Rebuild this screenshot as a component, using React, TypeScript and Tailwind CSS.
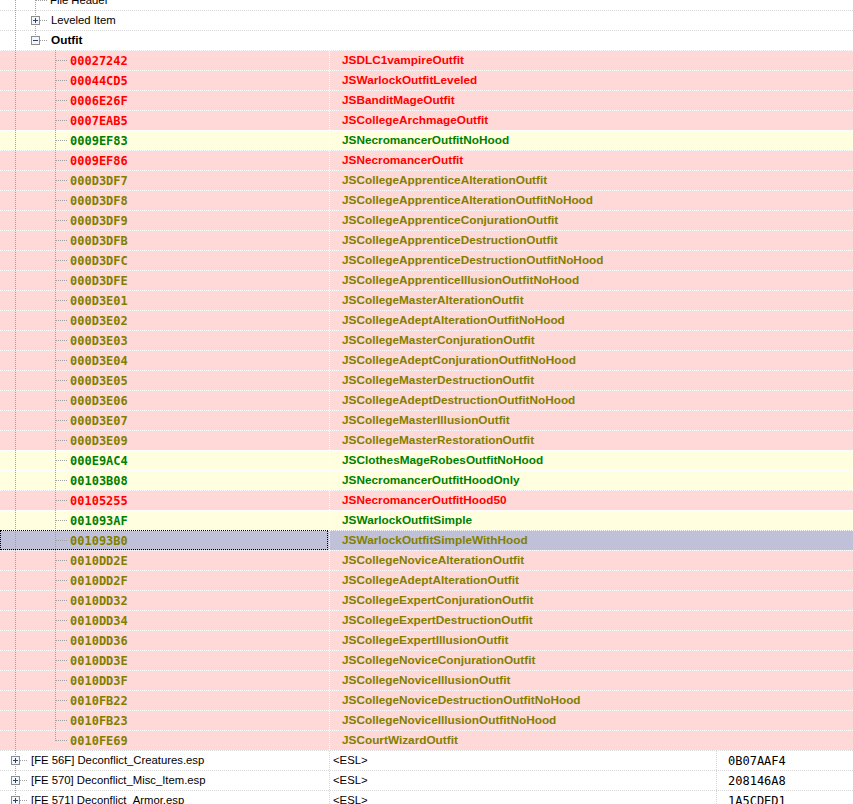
type Kind = "r" | "g" | "o";

const outfits: [string, string, Kind][] = [
  ["00027242", "JSDLC1vampireOutfit", "r"],
  ["00044CD5", "JSWarlockOutfitLeveled", "r"],
  ["0006E26F", "JSBanditMageOutfit", "r"],
  ["0007EAB5", "JSCollegeArchmageOutfit", "r"],
  ["0009EF83", "JSNecromancerOutfitNoHood", "g"],
  ["0009EF86", "JSNecromancerOutfit", "r"],
  ["000D3DF7", "JSCollegeApprenticeAlterationOutfit", "o"],
  ["000D3DF8", "JSCollegeApprenticeAlterationOutfitNoHood", "o"],
  ["000D3DF9", "JSCollegeApprenticeConjurationOutfit", "o"],
  ["000D3DFB", "JSCollegeApprenticeDestructionOutfit", "o"],
  ["000D3DFC", "JSCollegeApprenticeDestructionOutfitNoHood", "o"],
  ["000D3DFE", "JSCollegeApprenticeIllusionOutfitNoHood", "o"],
  ["000D3E01", "JSCollegeMasterAlterationOutfit", "o"],
  ["000D3E02", "JSCollegeAdeptAlterationOutfitNoHood", "o"],
  ["000D3E03", "JSCollegeMasterConjurationOutfit", "o"],
  ["000D3E04", "JSCollegeAdeptConjurationOutfitNoHood", "o"],
  ["000D3E05", "JSCollegeMasterDestructionOutfit", "o"],
  ["000D3E06", "JSCollegeAdeptDestructionOutfitNoHood", "o"],
  ["000D3E07", "JSCollegeMasterIllusionOutfit", "o"],
  ["000D3E09", "JSCollegeMasterRestorationOutfit", "o"],
  ["000E9AC4", "JSClothesMageRobesOutfitNoHood", "g"],
  ["00103B08", "JSNecromancerOutfitHoodOnly", "g"],
  ["00105255", "JSNecromancerOutfitHood50", "r"],
  ["001093AF", "JSWarlockOutfitSimple", "g"],
  ["001093B0", "JSWarlockOutfitSimpleWithHood", "o"],
  ["0010DD2E", "JSCollegeNoviceAlterationOutfit", "o"],
  ["0010DD2F", "JSCollegeAdeptAlterationOutfit", "o"],
  ["0010DD32", "JSCollegeExpertConjurationOutfit", "o"],
  ["0010DD34", "JSCollegeExpertDestructionOutfit", "o"],
  ["0010DD36", "JSCollegeExpertIllusionOutfit", "o"],
  ["0010DD3E", "JSCollegeNoviceConjurationOutfit", "o"],
  ["0010DD3F", "JSCollegeNoviceIllusionOutfit", "o"],
  ["0010FB22", "JSCollegeNoviceDestructionOutfitNoHood", "o"],
  ["0010FB23", "JSCollegeNoviceIllusionOutfitNoHood", "o"],
  ["0010FE69", "JSCourtWizardOutfit", "o"],
];

const plugins: [string, string][] = [
  ["[FE 56F] Deconflict_Creatures.esp", "0B07AAF4"],
  ["[FE 570] Deconflict_Misc_Item.esp", "208146A8"],
  ["[FE 571] Deconflict_Armor.esp", "1A5CDED1"],
];

const SELECTED = "001093B0";
const LINE = "#a0a0a0";

const textColor: Record<Kind, string> = {
  r: "text-[#ff0000]",
  g: "text-[#008000]",
  o: "text-[#808000]",
};

const rowBg: Record<Kind, string> = {
  r: "bg-[#ffd8d8]",
  g: "bg-[#ffffe0]",
  o: "bg-[#ffd8d8]",
};

const VLine = ({ x, y1 = 0, y2 = 20 }: { x: number; y1?: number; y2?: number }) => (
  <line x1={x + 0.5} y1={y1} x2={x + 0.5} y2={y2} stroke={LINE} strokeDasharray="1 1" />
);

const HLine = ({ x1, x2, y = 10 }: { x1: number; x2: number; y?: number }) => (
  <line x1={x1} y1={y + 0.5} x2={x2} y2={y + 0.5} stroke={LINE} strokeDasharray="1 1" />
);

const Box = ({ cx, open }: { cx: number; open: boolean }) => (
  <g>
    <rect x={cx - 3.5} y={6.5} width={8} height={8} fill="#f6f6f6" stroke="#8d8d8d" />
    <line x1={cx - 2} y1={10.5} x2={cx + 3} y2={10.5} stroke="#24447f" />
    {!open && <line x1={cx + 0.5} y1={8} x2={cx + 0.5} y2={13} stroke="#24447f" />}
  </g>
);

const Gutter = ({ width, children }: { width: number; children: React.ReactNode }) => (
  <svg width={width} height={20} className="shrink-0 self-start -mt-px">
    {children}
  </svg>
);

export default function App() {
  return (
    <div className="h-[804px] w-[853px] overflow-hidden bg-white font-['Liberation_Sans',Arial,sans-serif] text-[11.3px] text-black">
      <div className="-mt-[10px]">
        {/* group header rows */}
        <div className="flex h-[20px] items-center border-t border-dotted border-[#d8d8d8]">
          <Gutter width={50}>
            <VLine x={15} />
            <VLine x={35} />
            <HLine x1={36} x2={48} />
          </Gutter>
          <span>File Header</span>
        </div>
        <div className="flex h-[20px] items-center border-t border-dotted border-[#d8d8d8]">
          <Gutter width={51}>
            <VLine x={15} />
            <VLine x={35} />
            <HLine x1={40} x2={48} />
            <Box cx={35} open={false} />
          </Gutter>
          <span>Leveled Item</span>
        </div>
        <div className="flex h-[20px] items-center border-t border-dotted border-[#d8d8d8]">
          <Gutter width={51}>
            <VLine x={15} />
            <VLine x={35} y1={0} y2={6} />
            <HLine x1={40} x2={48} />
            <Box cx={35} open />
          </Gutter>
          <span className="font-bold text-[11.8px]">Outfit</span>
        </div>

        {/* outfit records */}
        {outfits.map(([id, name, kind], i) => {
          const selected = id === SELECTED;
          const last = i === outfits.length - 1;
          return (
            <div
              key={id}
              className={`flex h-[20px] items-stretch border-t border-dotted border-white font-bold text-[11.8px] ${
                selected ? "bg-[#c0c0d8]" : rowBg[kind]
              } ${textColor[kind]}`}
            >
              <div className="relative flex w-[330px] shrink-0 items-center border-r border-dotted border-white">
                <Gutter width={70}>
                  <VLine x={15} />
                  <VLine x={55} y1={0} y2={last ? 11 : 20} />
                  <HLine x1={56} x2={67} />
                </Gutter>
                <span className="font-['DejaVu_Sans_Mono',monospace] text-[12px] font-semibold">{id}</span>
                {selected && (
                  <div className="absolute -top-px bottom-0 left-0 right-px border border-dotted border-black" />
                )}
              </div>
              <div className="flex flex-1 items-center pl-[12px]">{name}</div>
            </div>
          );
        })}

        {/* other plugins */}
        {plugins.map(([file, crc]) => (
          <div
            key={file}
            className="flex h-[20px] items-stretch border-t border-dotted border-[#d8d8d8]"
          >
            <div className="flex w-[330px] shrink-0 items-center border-r border-dotted border-[#d8d8d8]">
              <Gutter width={31}>
                <VLine x={15} />
                <HLine x1={20} x2={28} />
                <Box cx={15} open={false} />
              </Gutter>
              <span>{file}</span>
            </div>
            <div className="flex w-[387px] shrink-0 items-center border-r border-dotted border-[#d8d8d8] pl-[3px]">
              &lt;ESL&gt;
            </div>
            <div className="flex flex-1 items-center pl-[11px] font-['DejaVu_Sans_Mono',monospace] text-[12px]">
              {crc}
            </div>
          </div>
        ))}
      </div>
    </div>
  );
}
